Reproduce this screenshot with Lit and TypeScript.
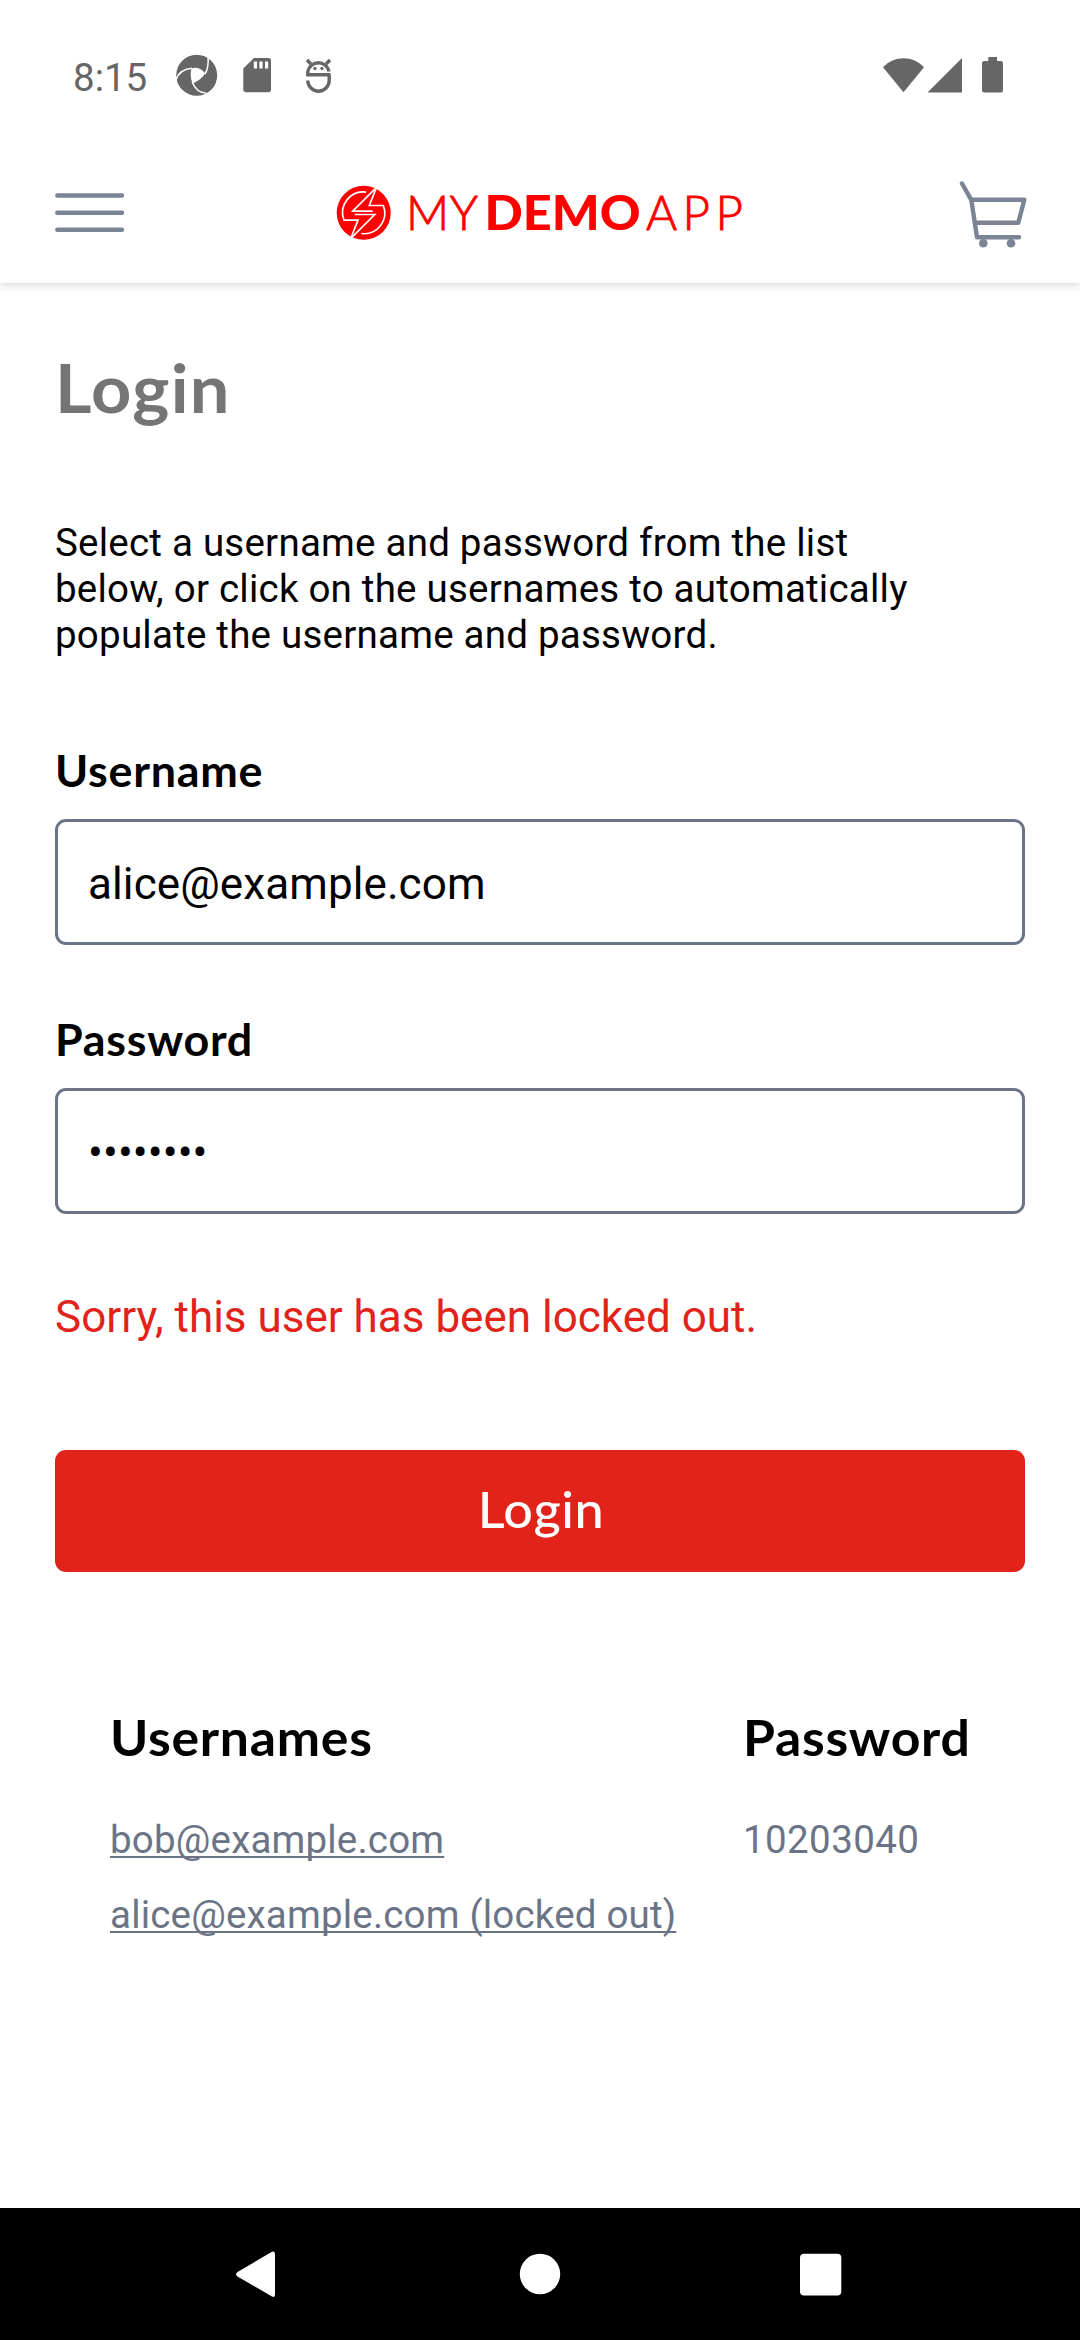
import { LitElement, html, css } from "lit";
import { customElement, property } from "lit/decorators.js";

@customElement("status-bar")
class StatusBar extends LitElement {
  static styles = css`
    :host { display: block; }
    .bar { display: flex; justify-content: space-between; align-items: flex-start; height: 150px; padding: 52px 77px 0 73px; box-sizing: border-box; color: #666; }
    .left { display: flex; align-items: flex-start; }
    .time { font: 400 38.5px/46px Roboto, sans-serif; padding-top: 3px; width: 103px; }
    svg { display: block; fill: #666; }
  `;
  render() {
    return html`<div class="bar">
      <div class="left">
        <span class="time">8:15</span>
        <svg width="160" height="46" viewBox="176 52 160 46">
          <circle cx="196.7" cy="75.3" r="20.5"></circle>
          <path fill="#fff" d="M191.5 68.5C196 66.8 201.5 68.5 205.2 73.5C201 79.5 197 81.5 192.5 83.5C190.3 78 190.2 73 191.5 68.5Z"></path>
          <g fill="none" stroke="#fff" stroke-width="1.5">
            <path d="M176 80C178 73.5 184 69 192 68.3"></path>
            <path d="M208 56C208.7 63 208 69 205 74"></path>
            <path d="M192.2 82C195 89 200 93 206 93"></path>
          </g>
          <path d="M254 58H268.5Q271 58 271 60.5V89.5Q271 92.3 268.5 92.3H246Q243.3 92.3 243.3 89.5V68.5Z"></path>
          <path fill="#fff" d="M253.8 61.5h3.2v7h-3.2zM259.4 61.5h3.2v7h-3.2zM265 61.5h3.2v7h-3.2z"></path>
          <g fill="none" stroke="#666" stroke-width="3.4">
            <path d="M330.5 74.8H307.8V71.5A10.8 10.8 0 0 1 329 71.5"></path>
            <path d="M307.8 80.5A10.7 10.7 0 0 0 329.2 80.5V74.8"></path>
            <path d="M307 60L311 64M330 60L326 64"></path>
          </g>
          <circle cx="315" cy="68.5" r="1.7"></circle><circle cx="322" cy="68.5" r="1.7"></circle>
        </svg>
      </div>
      <svg width="122" height="46" viewBox="881 52 122 46">
        <path d="M903.5 92.3L883 67.3C894.5 55.3 912.5 55.3 924 67.3Z"></path>
        <path d="M927.5 92.5L962 58V92.5Z"></path>
        <path d="M988.3 57h8.7v4h3.5q2.5 0 2.5 2.5v26.5q0 2.5-2.5 2.5h-16q-2.5 0-2.5-2.5V63.5q0-2.5 2.5-2.5h3.8z"></path>
      </svg>
    </div>`;
  }
}

@customElement("app-header")
class AppHeader extends LitElement {
  static styles = css`
    :host { display: block; }
    .bar { display: flex; justify-content: space-between; align-items: center; height: 133px; padding: 0 51px 8px 53px; box-sizing: border-box; background: #fff; box-shadow: 0 2px 8px rgba(0, 0, 0, 0.17); clip-path: inset(0 0 -14px 0); }
    svg { display: block; }
    .line { fill: none; stroke: #7a8494; stroke-width: 4.4; stroke-linecap: round; stroke-linejoin: round; }
    .wheel { fill: #7a8494; }
    .logo text { fill: #f00; font-family: Lato, sans-serif; font-size: 47.5px; }
    .logo .thin { font-weight: 300; stroke: #f00; stroke-width: 0.9px; }
    .logo .heavy { font-weight: 900; }
  `;
  render() {
    return html`<header class="bar">
      <svg width="74" height="60" viewBox="53 182.5 74 60">
        <path class="line" d="M57.3 195H122M57.3 212.2H122M57.3 229.3H122"></path>
      </svg>
      <svg class="logo" width="420" height="80" viewBox="332 172.5 420 80">
        <circle cx="363.7" cy="212.3" r="27" fill="#f00"></circle>
        <g transform="translate(320 165) scale(.33333)" fill="none" stroke="#fff" stroke-width="5">
          <path d="M171 62L148 120H190A62 62 0 0 1 124 204"></path>
          <path d="M91 222L114 164H72A62 62 0 0 1 138 80"></path>
          <path d="M171 64L98 137H158"></path>
          <path d="M91 220L164 147H104"></path>
        </g>
        <text class="thin" x="406" y="229.7" textLength="72">MY</text>
        <text class="heavy" x="484.5" y="229.7" textLength="156" lengthAdjust="spacingAndGlyphs">DEMO</text>
        <text class="thin" x="646" y="229.7" textLength="97">APP</text>
      </svg>
      <svg width="72" height="72" viewBox="957 176.5 72 72">
        <path class="line" d="M962 183L971.3 199.3H1024.3L1018.3 222.3H975.3M971.3 199.3L977 236.7H1019"></path>
        <circle class="wheel" cx="983.3" cy="242.7" r="4.3"></circle>
        <circle class="wheel" cx="1011" cy="242.7" r="4.3"></circle>
      </svg>
    </header>`;
  }
}

@customElement("form-field")
class FormField extends LitElement {
  @property() label = "";
  @property() type = "text";
  @property() value = "";
  static styles = css`
    :host { display: block; }
    .label { display: block; width: max-content; height: 75px; font: 700 44px/52px Lato, sans-serif; letter-spacing: 0.7px; color: #000; transform: scaleX(1.02); transform-origin: 0 0; }
    .input { display: block; width: 100%; height: 126px; box-sizing: border-box; border: 3px solid #6b7487; border-radius: 11px; padding: 4px 30px 0; margin: 0; outline: none; background: #fff; color: #000; font: 400 44px/52px Roboto, sans-serif; letter-spacing: 0.1px; }
  `;
  render() {
    return html`<label class="label">${this.label}</label>
      <input class="input" type=${this.type} .value=${this.value} />`;
  }
}

@customElement("nav-bar")
class NavBar extends LitElement {
  static styles = css`
    :host { display: block; }
    .bar { display: flex; justify-content: center; align-items: center; height: 132px; background: #000; }
    svg { display: block; fill: #fff; }
  `;
  render() {
    return html`<nav class="bar">
      <svg width="640" height="60" viewBox="220 2244 640 60">
        <path d="M272 2251.8Q275 2250.5 275 2254V2294.5Q275 2298 272 2296.5L237.5 2276.5Q234.5 2274.3 237.5 2272Z"></path>
        <circle cx="540" cy="2274" r="20.2"></circle>
        <rect x="800" y="2253.7" width="41.3" height="41.8" rx="4"></rect>
      </svg>
    </nav>`;
  }
}

@customElement("app-root")
class AppRoot extends LitElement {
  static styles = css`
    :host { display: block; }
    .screen { display: flex; flex-direction: column; width: 1080px; height: 2340px; background: #fff; overflow: hidden; }
    .content { flex: 1; padding: 65px 55px 0; font-family: Roboto, sans-serif; color: #000; }
    .title { margin: 0; width: max-content; font: 700 66px/80px Lato, sans-serif; letter-spacing: 1.2px; color: #757575; transform: scaleX(1.065); transform-origin: 0 0; }
    .intro { margin: 92px 0 86px; font-size: 38.5px; line-height: 46px; letter-spacing: 0.23px; }
    .password { margin-top: 68px; }
    .error { margin: 77px 0 107px; font-size: 44px; line-height: 52px; color: #e2231a; }
    .button { display: block; width: 100%; height: 122px; border: 0; border-radius: 11px; padding: 0 0 5px; background: #e2231a; color: #fff; font: 500 49.5px/60px Lato, sans-serif; letter-spacing: 0.5px; }
    .caption { display: inline-block; transform: translateX(1px) scaleX(1.055); }
    .accounts { display: grid; grid-template-columns: 633px 1fr; margin: 135px 0 0 55px; font-size: 38.5px; line-height: 46px; letter-spacing: 0.19px; color: #6b7487; }
    .heading { margin: 0 0 50px; width: max-content; font: 700 49.5px/60px Lato, sans-serif; letter-spacing: 0.7px; color: #000; transform: scaleX(1.045); transform-origin: 0 0; }
    .account { display: block; width: max-content; margin-bottom: 29px; text-decoration: underline; text-decoration-skip-ink: none; text-decoration-thickness: 2px; text-underline-offset: 3px; }
    .secret { letter-spacing: 0.4px; }
  `;
  users = ["bob@example.com", "alice@example.com (locked out)"];
  render() {
    return html`<div class="screen">
      <status-bar></status-bar>
      <app-header></app-header>
      <main class="content">
        <h1 class="title">Login</h1>
        <p class="intro">Select a username and password from the list<br />below, or click on the usernames to automatically<br />populate the username and password.</p>
        <form-field label="Username" value="alice@example.com"></form-field>
        <form-field class="password" label="Password" type="password" value="10203040"></form-field>
        <p class="error">Sorry, this user has been locked out.</p>
        <button class="button"><span class="caption">Login</span></button>
        <section class="accounts">
          <div>
            <h2 class="heading">Usernames</h2>
            ${this.users.map((u) => html`<a class="account">${u}</a>`)}
          </div>
          <div>
            <h2 class="heading">Password</h2>
            <span class="secret">10203040</span>
          </div>
        </section>
      </main>
      <nav-bar></nav-bar>
    </div>`;
  }
}
